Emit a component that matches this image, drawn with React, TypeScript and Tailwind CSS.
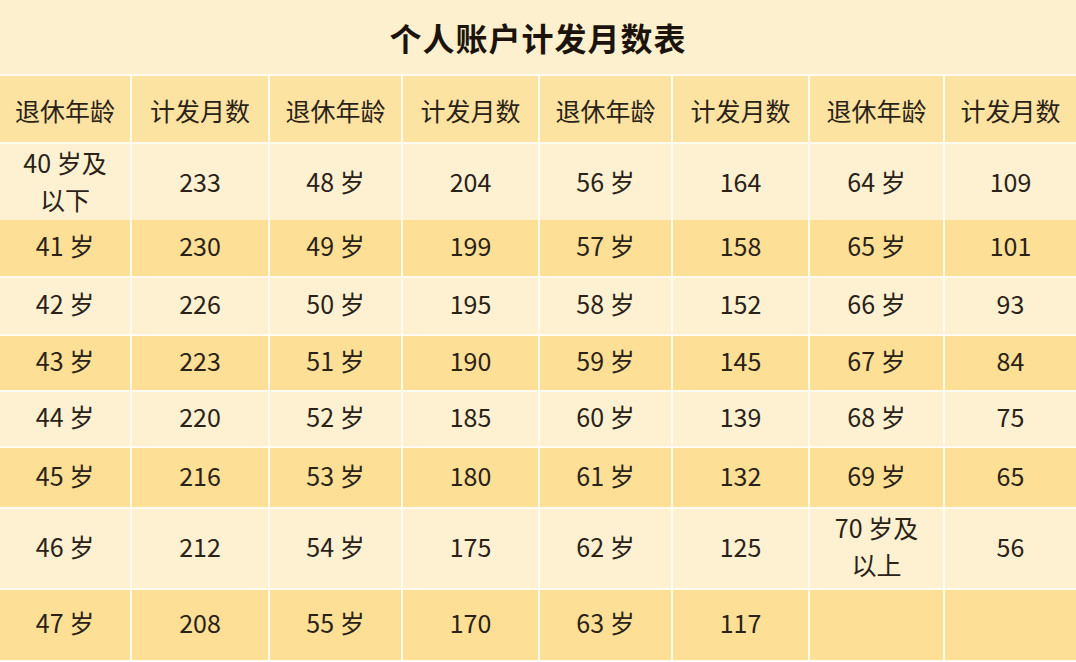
const rows: { h: string; cells: string[][] }[] = [
  { h: "h-[74px]", cells: [["40 岁及", "以下"], ["233"], ["48 岁"], ["204"], ["56 岁"], ["164"], ["64 岁"], ["109"]] },
  { h: "h-[56px]", cells: [["41 岁"], ["230"], ["49 岁"], ["199"], ["57 岁"], ["158"], ["65 岁"], ["101"]] },
  { h: "h-[56px]", cells: [["42 岁"], ["226"], ["50 岁"], ["195"], ["58 岁"], ["152"], ["66 岁"], ["93"]] },
  { h: "h-[54px]", cells: [["43 岁"], ["223"], ["51 岁"], ["190"], ["59 岁"], ["145"], ["67 岁"], ["84"]] },
  { h: "h-[54px]", cells: [["44 岁"], ["220"], ["52 岁"], ["185"], ["60 岁"], ["139"], ["68 岁"], ["75"]] },
  { h: "h-[59px]", cells: [["45 岁"], ["216"], ["53 岁"], ["180"], ["61 岁"], ["132"], ["69 岁"], ["65"]] },
  { h: "h-[79px]", cells: [["46 岁"], ["212"], ["54 岁"], ["175"], ["62 岁"], ["125"], ["70 岁及", "以上"], ["56"]] },
  { h: "h-[70px]", cells: [["47 岁"], ["208"], ["55 岁"], ["170"], ["63 岁"], ["117"], [""], [""]] },
]

const headers = ["退休年龄", "计发月数", "退休年龄", "计发月数", "退休年龄", "计发月数", "退休年龄", "计发月数"]

const cols = "grid grid-cols-[130px_136px_131px_135px_131px_135px_133px_1fr] gap-x-[2px]"

export default function App() {
  return (
    <div className="w-[1076px] h-[662px] overflow-hidden bg-[#fffbf1] text-[#2b2217] font-['Noto_Sans_CJK_SC',sans-serif]">
      <div className="h-[74px] bg-[#fdf0ce] flex items-center justify-center">
        <h1 className="text-[32px] font-bold text-[#1c140c] tracking-[1px]">个人账户计发月数表</h1>
      </div>
      <div className="flex flex-col gap-y-[2px] pt-[2px]">
        <div className={`${cols} h-[66px]`}>
          {headers.map((t, i) => (
            <div key={i} className="bg-[#fde3a2] flex items-center justify-center text-[25px] pt-[3px]">
              {t}
            </div>
          ))}
        </div>
        {rows.map((row, ri) => (
          <div key={ri} className={`${cols} ${row.h}`}>
            {row.cells.map((lines, ci) => (
              <div
                key={ci}
                className={`${ri % 2 === 0 ? "bg-[#fdf1d2]" : "bg-[#fddf96]"} flex flex-col items-center justify-center text-[25px] leading-[37px] pb-[5px]`}
              >
                {lines.map((l, li) => (
                  <span key={li}>{l}</span>
                ))}
              </div>
            ))}
          </div>
        ))}
      </div>
    </div>
  )
}
